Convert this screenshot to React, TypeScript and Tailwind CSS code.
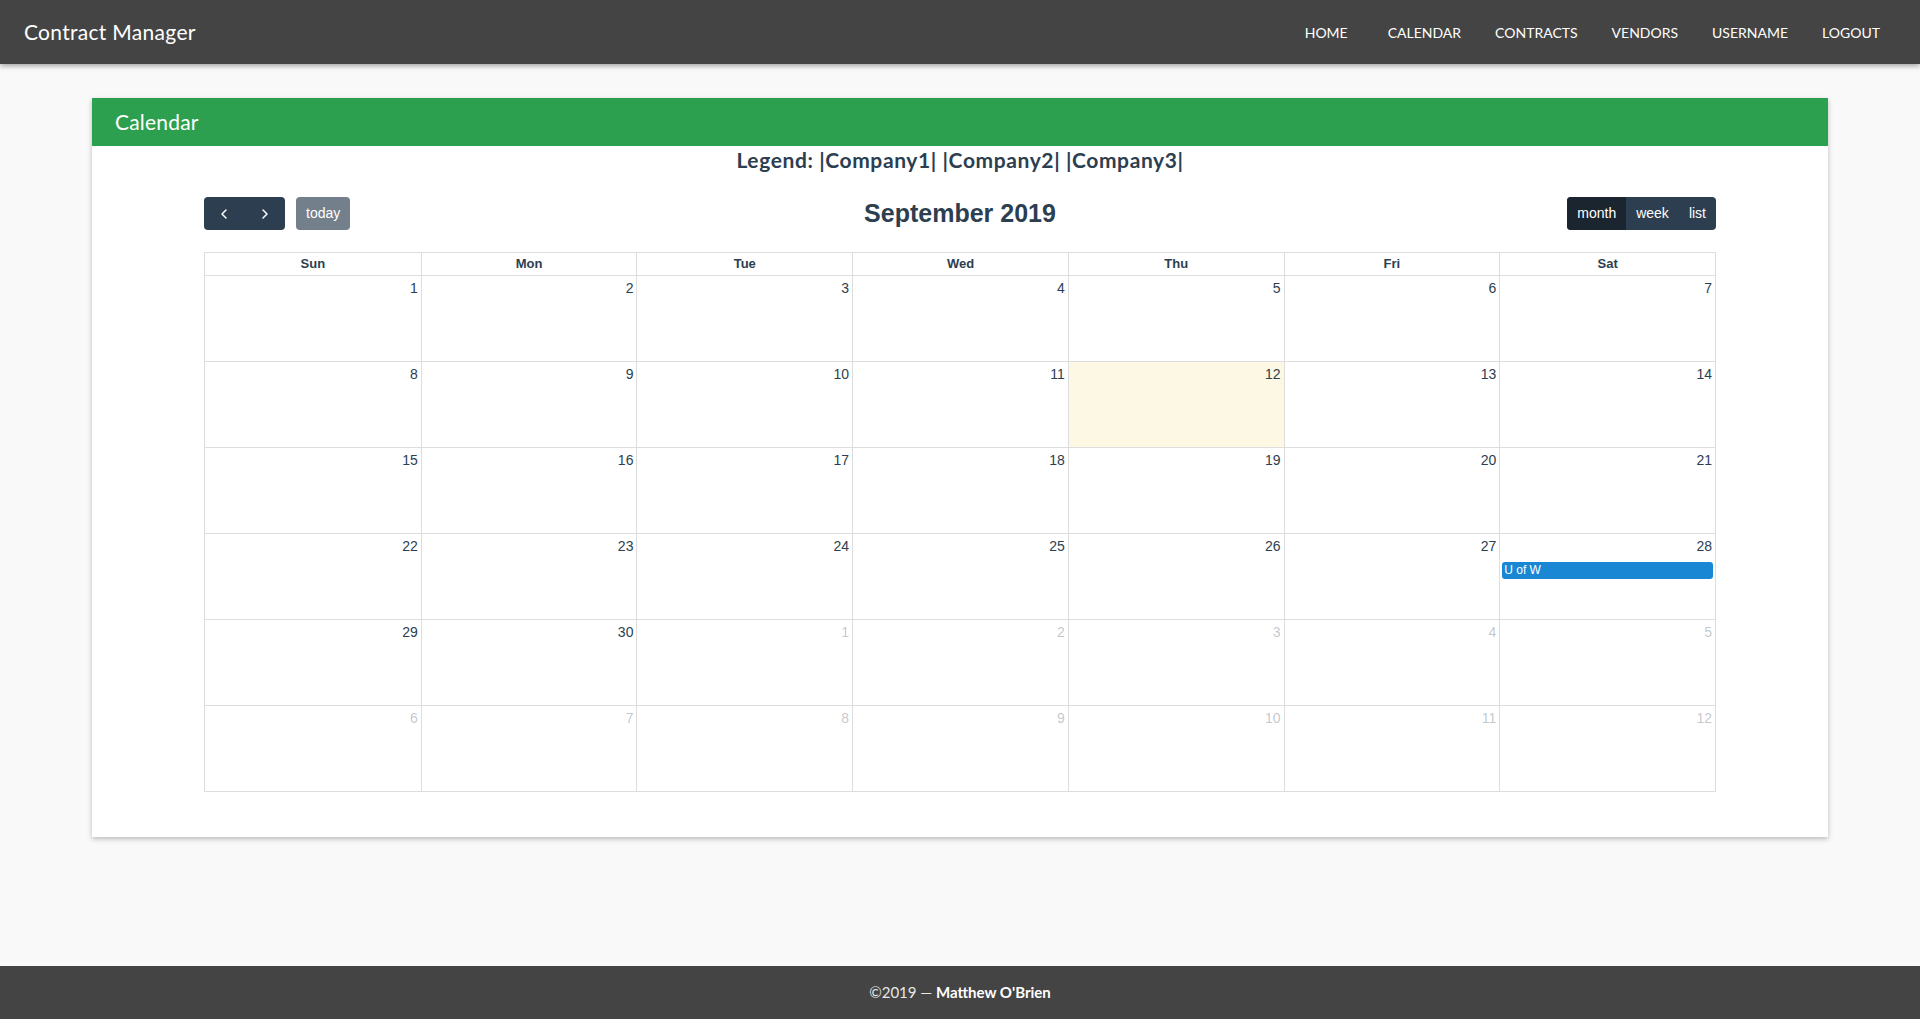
import React from "react";
import { ChevronLeft, ChevronRight } from "lucide-react";

const navItems = ["HOME", "CALENDAR", "CONTRACTS", "VENDORS", "USERNAME", "LOGOUT"];
const dayNames = ["Sun", "Mon", "Tue", "Wed", "Thu", "Fri", "Sat"];

// September 2019 starts on a Sunday, so the grid is 1..30 then Oct 1..12
const cells = [
  ...Array.from({ length: 30 }, (_, i) => ({ day: i + 1, other: false })),
  ...Array.from({ length: 12 }, (_, i) => ({ day: i + 1, other: true })),
];

function CalendarGrid() {
  const weeks: { day: number; other: boolean }[][] = [];
  for (let i = 0; i < cells.length; i += 7) weeks.push(cells.slice(i, i + 7));

  return (
    <div className="w-[1512px] mx-auto border border-[#ddd] font-['Liberation_Sans',Arial,sans-serif] text-[#2c3e50]">
      <div className="grid grid-cols-7 h-[22px]">
        {dayNames.map((d, i) => (
          <div
            key={d}
            className={`flex items-center justify-center text-[13px] font-bold ${i > 0 ? "border-l border-[#ddd]" : ""}`}
          >
            {d}
          </div>
        ))}
      </div>
      {weeks.map((week, wi) => (
        <div key={wi} className="grid grid-cols-7 h-[86px] border-t border-[#ddd]">
          {week.map((c, ci) => {
            const isToday = !c.other && c.day === 12;
            const hasEvent = !c.other && c.day === 28;
            return (
              <div
                key={ci}
                className={`flex flex-col ${ci > 0 ? "border-l border-[#ddd]" : ""} ${isToday ? "bg-[#fcf8e3]" : ""}`}
              >
                <div
                  className={`text-right pr-[3px] pt-[2px] text-[14px] leading-[20px] ${c.other ? "text-[#2c3e50]/30" : ""}`}
                >
                  {c.day}
                </div>
                {hasEvent && (
                  <div className="mx-[2px] mt-[6px] h-[17px] rounded-[3px] bg-[#1a87d4] text-white text-[12px] leading-[17px] px-[2px]">
                    U of W
                  </div>
                )}
              </div>
            );
          })}
        </div>
      ))}
    </div>
  );
}

export default function App() {
  return (
    <div className="flex flex-col h-[1019px] bg-[#f9f9f9] font-['Lato','Open_Sans',sans-serif]">
      <header className="relative z-10 flex items-center justify-between h-16 shrink-0 bg-[#444444] pl-6 pr-[23px] shadow-[0_2px_5px_rgba(0,0,0,0.35)]">
        <div className="text-white text-[21px] tracking-[0.3px]">Contract Manager</div>
        <nav className="flex items-center">
          {navItems.map((item) => (
            <a
              key={item}
              className={`px-[17px] text-white text-[14px] cursor-pointer ${item === "HOME" ? "mr-[6px]" : ""}`}
            >
              {item}
            </a>
          ))}
        </nav>
      </header>

      <main className="flex-1">
        <div className="mt-[34px] mx-[92px] bg-white shadow-[0_2px_5px_rgba(0,0,0,0.25)] pb-[45px]">
          <div className="h-12 flex items-center pl-[23px] bg-[#2da04f] text-white text-[21px] tracking-[0.2px]">
            Calendar
          </div>
          <div className="text-center text-[#2c3e50] text-[21px] tracking-[0.6px] font-bold leading-[28px]">
            Legend: |Company1| |Company2| |Company3|
          </div>

          <div className="w-[1512px] mx-auto mt-[21px] mb-[19px] flex items-center justify-between font-['Liberation_Sans',Arial,sans-serif]">
            <div className="flex items-center w-[300px]">
              <div className="flex rounded-[4px] overflow-hidden bg-[#2c3e50] text-white">
                <button className="w-[40px] h-[33px] flex items-center justify-center">
                  <ChevronLeft size={16} strokeWidth={2.2} />
                </button>
                <button className="w-[41px] h-[33px] flex items-center justify-center">
                  <ChevronRight size={16} strokeWidth={2.2} />
                </button>
              </div>
              <button className="ml-[11px] h-[33px] px-[10px] rounded-[4px] bg-[#737f8a] text-white text-[14px]">
                today
              </button>
            </div>
            <h2 className="text-[25px] font-bold text-[#2c3e50]">September 2019</h2>
            <div className="flex justify-end w-[300px]">
              <div className="flex rounded-[4px] overflow-hidden bg-[#2c3e50] text-white text-[14px] h-[33px]">
                <button className="px-[10px] bg-[#1a252f]">month</button>
                <button className="px-[10px]">week</button>
                <button className="px-[10px]">list</button>
              </div>
            </div>
          </div>

          <CalendarGrid />
        </div>
      </main>

      <footer className="h-[53px] shrink-0 flex items-center justify-center bg-[#444444] text-[#e8e8e8] text-[15px]">
        <span>
          ©2019 — <span className="font-bold text-white">Matthew O'Brien</span>
        </span>
      </footer>
    </div>
  );
}
